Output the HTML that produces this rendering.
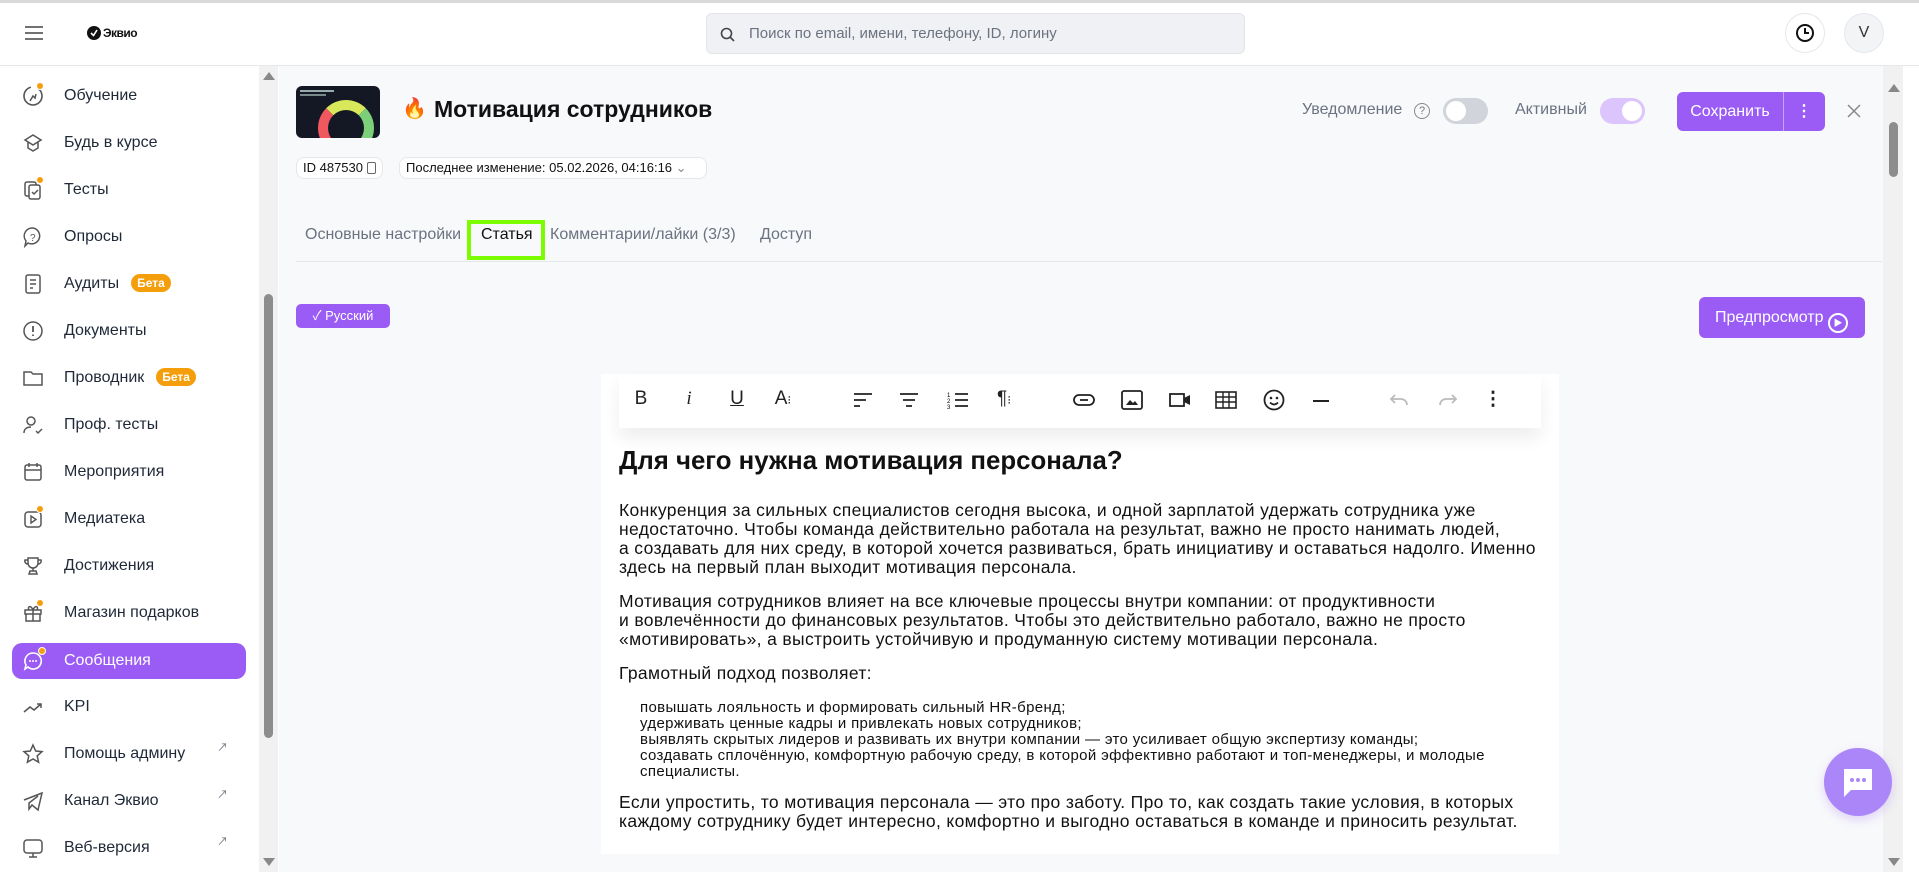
<!DOCTYPE html>
<html><head><meta charset="utf-8"><style>
*{box-sizing:border-box;margin:0;padding:0}
body{width:1919px;height:872px;overflow:hidden;background:#fff;font-family:"Liberation Sans","Noto Sans CJK SC",sans-serif;color:#111;position:relative}
.abs{position:absolute}
.top{left:0;top:0;width:1919px;height:3px;background:#d9d9d9}
.hdr-line{left:0;top:65px;width:1919px;height:1px;background:#e5e7eb}
.search{left:706px;top:13px;width:539px;height:41px;background:#f0f1f4;border:1px solid #e3e5e9;border-radius:6px;color:#6b7280;font-size:15px;line-height:39px;padding-left:42px}
.circ{width:40px;height:40px;border-radius:50%;border:1px solid #e5e7eb;background:#fff;text-align:center;line-height:38px;font-size:16px;color:#333}
.side{left:0;top:66px;width:257px;height:806px;background:#fff}
.item{position:absolute;left:12px;width:234px;height:36px;border-radius:10px;font-size:16px;line-height:36px;padding-left:52px;color:#1f2937}
.item svg{position:absolute;left:10px;top:7px}
.item.act{background:#9a5cf5;color:#fff}
.beta{display:inline-block;background:#f59e0b;color:#fff;font-size:12px;font-weight:bold;line-height:18px;padding:0 6px;border-radius:9px;margin-left:12px;vertical-align:1px}
.ext{position:absolute;right:18px;top:-6px;font-size:11px;color:#6b7280}
.dot{position:absolute;width:8px;height:8px;border-radius:50%;background:#f59e0b;border:1px solid #fff}
.sb1{left:259px;top:66px;width:19px;height:806px;background:#f1f1f1}
.main{left:279px;top:66px;width:1604px;height:806px;background:#f8f9fb}
.sb2{left:1883px;top:66px;width:20px;height:806px;background:#f1f1f1}
.chip{border:1px solid #e5e7eb;background:#fff;border-radius:8px;font-size:13px;line-height:20px;padding:0 6px;color:#111}
.tab{font-size:16px;color:#6b7280;top:226px}
.btn{background:#9a5cf5;color:#fff;border-radius:6px;font-size:16px}
.card{left:601px;top:374px;width:958px;height:480px;background:#fff}
.tb{left:619px;top:374px;width:922px;height:54px;background:#fff;box-shadow:0 10px 18px rgba(0,0,0,.07)}
.ic{position:absolute;top:14px;font-size:19px;color:#222;text-align:center;width:26px;margin-left:-13px}
.txt{left:619px;font-size:17.5px;letter-spacing:.35px;line-height:19px;color:#111;white-space:nowrap}
</style></head><body>
<div class="abs top"></div>
<svg class="abs" style="left:24px;top:25px" width="20" height="16"><path d="M1 2h18M1 8h18M1 14h18" stroke="#444" stroke-width="1.6"/></svg>
<div class="abs" style="left:87px;top:26px;width:14px;height:14px;border-radius:50%;background:#111"></div>
<svg class="abs" style="left:87px;top:26px" width="14" height="14"><path d="M4 7l2.5 2.5L10 4" stroke="#fff" stroke-width="1.6" fill="none"/></svg>
<div class="abs" style="left:103px;top:26px;font-size:12px;font-weight:bold;letter-spacing:-.5px">Эквио</div>
<div class="abs search">Поиск по email, имени, телефону, ID, логину</div>
<svg class="abs" style="left:720px;top:27px" width="15" height="15"><circle cx="6.5" cy="6.5" r="5" stroke="#444" stroke-width="1.6" fill="none"/><path d="M10 10l4 4" stroke="#444" stroke-width="1.6"/></svg>
<div class="abs circ" style="left:1785px;top:13px"><svg width="22" height="22" style="margin-top:8px"><circle cx="11" cy="11" r="8" stroke="#111" stroke-width="2" fill="none"/><path d="M11 6v5h4" stroke="#111" stroke-width="2" fill="none"/></svg></div>
<div class="abs circ" style="left:1844px;top:13px;background:#f3f4f6">V</div>
<div class="abs hdr-line"></div>

<div class="abs side">
 <div class="item" style="top:12px"><svg width="22" height="22"><circle cx="11" cy="11" r="9" stroke="#555" stroke-width="1.6" fill="none" stroke-dasharray="40 8"/><path d="M8 16l3-5 2 2 1-4" stroke="#555" stroke-width="1.5" fill="none"/></svg><span class="dot" style="left:24px;top:4px"></span>Обучение</div>
 <div class="item" style="top:59px"><svg width="22" height="22"><path d="M3 8l8-5 8 5-8 5z M6 10v6l5 3 5-3v-6" stroke="#555" stroke-width="1.5" fill="none"/></svg>Будь в курсе</div>
 <div class="item" style="top:106px"><svg width="22" height="22"><rect x="3" y="3" width="11" height="14" rx="2" stroke="#555" stroke-width="1.5" fill="none"/><rect x="7" y="6" width="11" height="14" rx="2" stroke="#555" stroke-width="1.5" fill="#fff"/><path d="M10 13l2 2 4-4" stroke="#555" stroke-width="1.5" fill="none"/></svg><span class="dot" style="left:24px;top:4px"></span>Тесты</div>
 <div class="item" style="top:153px"><svg width="22" height="22"><path d="M11 2a8 8 0 1 1-5 15l-3 3 1-5A8 8 0 0 1 11 2z" stroke="#555" stroke-width="1.5" fill="none"/><text x="8" y="15" font-size="10" fill="#555">?</text></svg>Опросы</div>
 <div class="item" style="top:200px"><svg width="22" height="22"><rect x="4" y="2" width="14" height="18" rx="2" stroke="#555" stroke-width="1.5" fill="none"/><path d="M8 7h6M8 11h6M8 15h3" stroke="#555" stroke-width="1.5"/></svg>Аудиты<span class="beta">Бета</span></div>
 <div class="item" style="top:247px"><svg width="22" height="22"><circle cx="11" cy="11" r="9" stroke="#555" stroke-width="1.5" fill="none"/><path d="M11 6v6M11 14.5v1.5" stroke="#555" stroke-width="1.8"/></svg>Документы</div>
 <div class="item" style="top:294px"><svg width="22" height="22"><path d="M2 5h7l2 2h9v11H2z" stroke="#555" stroke-width="1.5" fill="none"/></svg>Проводник<span class="beta">Бета</span></div>
 <div class="item" style="top:341px"><svg width="22" height="22"><circle cx="9" cy="7" r="4" stroke="#555" stroke-width="1.5" fill="none"/><path d="M2 19c0-4 3-6 7-6M14 17l2 2 4-4" stroke="#555" stroke-width="1.5" fill="none"/></svg>Проф. тесты</div>
 <div class="item" style="top:388px"><svg width="22" height="22"><rect x="3" y="4" width="16" height="15" rx="2" stroke="#555" stroke-width="1.5" fill="none"/><path d="M3 9h16M7 2v4M15 2v4" stroke="#555" stroke-width="1.5"/></svg>Мероприятия</div>
 <div class="item" style="top:435px"><svg width="22" height="22"><rect x="3" y="4" width="16" height="15" rx="3" stroke="#555" stroke-width="1.5" fill="none"/><path d="M9 8v7l5-3.5z" stroke="#555" stroke-width="1.4" fill="none"/></svg><span class="dot" style="left:24px;top:4px"></span>Медиатека</div>
 <div class="item" style="top:482px"><svg width="22" height="22"><path d="M6 3h10v5a5 5 0 0 1-10 0zM6 5H3a3 3 0 0 0 3 4M16 5h3a3 3 0 0 1-3 4M11 13v3M7 19h8l-1-3H8z" stroke="#555" stroke-width="1.5" fill="none"/></svg>Достижения</div>
 <div class="item" style="top:529px"><svg width="22" height="22"><rect x="3" y="8" width="16" height="4" stroke="#555" stroke-width="1.5" fill="none"/><path d="M4 12v7h14v-7M11 8v11M11 8C9 3 5 4 7 8M11 8c2-5 6-4 4 0" stroke="#555" stroke-width="1.5" fill="none"/></svg><span class="dot" style="left:24px;top:4px"></span>Магазин подарков</div>
 <div class="item act" style="top:577px"><svg width="22" height="22"><path d="M11 3a8 8 0 1 1-5 14l-3 2 1-4A8 8 0 0 1 11 3z" stroke="#fff" stroke-width="1.6" fill="none"/><circle cx="8" cy="11" r="1" fill="#fff"/><circle cx="11" cy="11" r="1" fill="#fff"/><circle cx="14" cy="11" r="1" fill="#fff"/></svg><span class="dot" style="left:26px;top:4px"></span>Сообщения</div>
 <div class="item" style="top:623px"><svg width="22" height="22"><path d="M2 16l6-5 4 3 7-6M15 8h4v4" stroke="#555" stroke-width="1.5" fill="none"/></svg>KPI</div>
 <div class="item" style="top:670px"><svg width="22" height="22"><path d="M11 2l2.7 6 6.3.6-4.8 4.3 1.4 6.3L11 16l-5.6 3.2 1.4-6.3L2 8.6 8.3 8z" stroke="#555" stroke-width="1.5" fill="none"/></svg>Помощь админу<span class="ext">↗</span></div>
 <div class="item" style="top:717px"><svg width="22" height="22"><path d="M2 10l18-7-4 17-6-5-3 4v-6l9-7" stroke="#555" stroke-width="1.5" fill="none"/></svg>Канал Эквио<span class="ext">↗</span></div>
 <div class="item" style="top:764px"><svg width="22" height="22"><rect x="2" y="3" width="18" height="13" rx="3" stroke="#555" stroke-width="1.5" fill="none"/><path d="M11 16v4M7 20h8" stroke="#555" stroke-width="1.5"/></svg>Веб-версия<span class="ext">↗</span></div>
</div>
<div class="abs sb1"></div>
<div class="abs" style="left:263px;top:72px;width:0;height:0;border-left:6px solid transparent;border-right:6px solid transparent;border-bottom:8px solid #888"></div>
<div class="abs" style="left:264px;top:294px;width:9px;height:444px;background:#8d8d8d;border-radius:5px"></div>
<div class="abs" style="left:263px;top:858px;width:0;height:0;border-left:6px solid transparent;border-right:6px solid transparent;border-top:8px solid #888"></div>

<div class="abs main"></div>
<div class="abs" style="left:296px;top:86px;width:84px;height:52px;border-radius:6px;background:#141824;overflow:hidden">
 <div style="position:absolute;left:22px;top:14px;width:56px;height:56px;border-radius:50%;border:10px solid transparent;border-top-color:#d9e85a;border-right-color:#7cd07a;border-left-color:#f0585f"></div>
 <div style="position:absolute;left:4px;top:4px;width:34px;height:2px;background:#9aa"></div>
 <div style="position:absolute;left:4px;top:8px;width:26px;height:2px;background:#788"></div>
</div>
<div class="abs" style="left:402px;top:96px;font-size:20px">🔥</div>
<div class="abs" style="left:434px;top:96px;font-size:23px;font-weight:bold">Мотивация сотрудников</div>
<div class="abs chip" style="left:296px;top:157px">ID 487530 <span style="display:inline-block;width:9px;height:12px;border:1.3px solid #666;border-radius:2px;vertical-align:-2px"></span></div>
<div class="abs chip" style="left:399px;top:157px;width:308px">Последнее изменение: 05.02.2026, 04:16:16 <span style="color:#888">⌄</span></div>

<div class="abs" style="left:1302px;top:101px;font-size:16px;color:#6b7280">Уведомление</div>
<div class="abs" style="left:1414px;top:103px;width:16px;height:16px;border:1.3px solid #888;border-radius:50%;font-size:11px;text-align:center;line-height:14px;color:#777">?</div>
<div class="abs" style="left:1443px;top:98px;width:45px;height:26px;border-radius:13px;background:#d1d5db"><div style="position:absolute;left:3px;top:3px;width:20px;height:20px;border-radius:50%;background:#fff"></div></div>
<div class="abs" style="left:1515px;top:101px;font-size:16px;color:#6b7280">Активный</div>
<div class="abs" style="left:1600px;top:98px;width:45px;height:26px;border-radius:13px;background:#dcc4fd"><div style="position:absolute;right:3px;top:3px;width:20px;height:20px;border-radius:50%;background:#fff"></div></div>
<div class="abs btn" style="left:1677px;top:92px;width:148px;height:39px"><div style="position:absolute;left:0;width:106px;text-align:center;line-height:39px">Сохранить</div><div style="position:absolute;left:106px;top:0;width:1px;height:39px;background:#c4a4fb"></div><div style="position:absolute;left:106px;width:42px;text-align:center;line-height:39px;font-weight:bold">⋮</div></div>
<svg class="abs" style="left:1847px;top:104px" width="14" height="14"><path d="M1 1l12 12M13 1L1 13" stroke="#888" stroke-width="1.5"/></svg>
<div class="abs sb2"></div>
<div class="abs" style="left:1888px;top:84px;width:0;height:0;border-left:6px solid transparent;border-right:6px solid transparent;border-bottom:8px solid #888"></div>
<div class="abs" style="left:1889px;top:122px;width:9px;height:55px;background:#8d8d8d;border-radius:5px"></div>
<div class="abs" style="left:1888px;top:858px;width:0;height:0;border-left:6px solid transparent;border-right:6px solid transparent;border-top:8px solid #888"></div>

<div class="abs tab" style="left:305px">Основные настройки</div>
<div class="abs" style="left:467px;top:220px;width:78px;height:40px;border:4px solid #7cfc00"></div>
<div class="abs tab" style="left:481px;color:#111">Статья</div>
<div class="abs tab" style="left:550px">Комментарии/лайки (3/3)</div>
<div class="abs tab" style="left:760px">Доступ</div>
<div class="abs" style="left:296px;top:261px;width:1586px;height:1px;background:#e5e7eb"></div>

<div class="abs btn" style="left:296px;top:304px;width:94px;height:24px;font-size:13px;line-height:24px;border-radius:5px;text-align:center">✓ Русский</div>
<div class="abs btn" style="left:1699px;top:297px;width:166px;height:41px;line-height:41px;padding-left:16px">Предпросмотр <span style="display:inline-block;width:20px;height:20px;border:2px solid #fff;border-radius:50%;vertical-align:-4px;font-size:9px;line-height:16px;text-align:center">▶</span></div>

<div class="abs card"></div>
<div class="abs tb">
 <div class="ic" style="left:22px;">B</div>
 <div class="ic" style="left:70px;font-style:italic;font-family:'Liberation Serif'">i</div>
 <div class="ic" style="left:118px;text-decoration:underline">U</div>
 <div class="ic" style="left:164px">A<span style="font-size:12px">⁝</span></div>
 <svg class="abs" style="left:234px;top:18px" width="20" height="16"><path d="M1 2h18M1 8h12M1 14h6" stroke="#222" stroke-width="1.8"/></svg>
 <svg class="abs" style="left:280px;top:18px" width="20" height="16"><path d="M1 2h18M4 8h12M7 14h6" stroke="#222" stroke-width="1.8"/></svg>
 <svg class="abs" style="left:328px;top:17px" width="22" height="18"><path d="M8 3h13M8 9h13M8 15h13" stroke="#222" stroke-width="1.8"/><text x="0" y="6" font-size="6">1</text><text x="0" y="12" font-size="6">2</text><text x="0" y="18" font-size="6">3</text></svg>
 <div class="ic" style="left:385px">¶<span style="font-size:12px">⁝</span></div>
 <svg class="abs" style="left:454px;top:19px" width="22" height="14"><rect x="1" y="2" width="20" height="10" rx="5" stroke="#222" stroke-width="1.8" fill="none"/><path d="M7 7h8" stroke="#222" stroke-width="1.8"/></svg>
 <svg class="abs" style="left:502px;top:16px" width="22" height="20"><rect x="1" y="1" width="20" height="18" rx="2" stroke="#222" stroke-width="1.8" fill="none"/><path d="M5 15l4-5 3 3 2-2 3 4z" fill="#222"/></svg>
 <svg class="abs" style="left:550px;top:18px" width="22" height="16"><rect x="1" y="2" width="14" height="12" stroke="#222" stroke-width="1.8" fill="none"/><path d="M15 6l6-3v10l-6-3z" fill="#222"/></svg>
 <svg class="abs" style="left:596px;top:17px" width="22" height="18"><rect x="1" y="1" width="20" height="16" stroke="#222" stroke-width="1.6" fill="none"/><path d="M1 6h20M1 11h20M8 1v16M14 1v16" stroke="#222" stroke-width="1.4"/></svg>
 <svg class="abs" style="left:644px;top:15px" width="22" height="22"><circle cx="11" cy="11" r="9.5" stroke="#222" stroke-width="1.8" fill="none"/><circle cx="8" cy="9" r="1.3" fill="#222"/><circle cx="14" cy="9" r="1.3" fill="#222"/><path d="M7 13.5q4 4 8 0" stroke="#222" stroke-width="1.6" fill="none"/></svg>
 <div class="abs" style="left:694px;top:26px;width:16px;height:2px;background:#222"></div>
 <svg class="abs" style="left:770px;top:19px" width="20" height="14"><path d="M6 2L2 6l4 4M2 6h10a6 6 0 0 1 6 6" stroke="#bbb" stroke-width="1.8" fill="none"/></svg>
 <svg class="abs" style="left:819px;top:19px" width="20" height="14"><path d="M14 2l4 4-4 4M18 6H8a6 6 0 0 0-6 6" stroke="#bbb" stroke-width="1.8" fill="none"/></svg>
 <div class="ic" style="left:874px;font-weight:bold">⋮</div>
</div>
<div class="abs" style="left:619px;top:447px;font-size:25.8px;font-weight:bold">Для чего нужна мотивация персонала?</div>
<div class="abs txt" style="top:501px">Конкуренция за сильных специалистов сегодня высока, и одной зарплатой удержать сотрудника уже<br>недостаточно. Чтобы команда действительно работала на результат, важно не просто нанимать людей,<br>а создавать для них среду, в которой хочется развиваться, брать инициативу и оставаться надолго. Именно<br>здесь на первый план выходит мотивация персонала.</div>
<div class="abs txt" style="top:592px">Мотивация сотрудников влияет на все ключевые процессы внутри компании: от продуктивности<br>и вовлечённости до финансовых результатов. Чтобы это действительно работало, важно не просто<br>«мотивировать», а выстроить устойчивую и продуманную систему мотивации персонала.</div>
<div class="abs txt" style="top:664px">Грамотный подход позволяет:</div>
<div class="abs txt" style="top:700px;left:640px;font-size:15px;letter-spacing:.35px;line-height:16px">повышать лояльность и формировать сильный HR-бренд;<br>удерживать ценные кадры и привлекать новых сотрудников;<br>выявлять скрытых лидеров и развивать их внутри компании — это усиливает общую экспертизу команды;<br>создавать сплочённую, комфортную рабочую среду, в которой эффективно работают и топ-менеджеры, и молодые<br>специалисты.</div>
<div class="abs txt" style="top:793px">Если упростить, то мотивация персонала — это про заботу. Про то, как создать такие условия, в которых<br>каждому сотруднику будет интересно, комфортно и выгодно оставаться в команде и приносить результат.</div>

<div class="abs" style="left:1824px;top:748px;width:68px;height:68px;border-radius:50%;background:#ab86f8;box-shadow:0 4px 10px rgba(150,100,240,.25)"></div>
<svg class="abs" style="left:1841px;top:767px" width="34" height="32"><path d="M3 2h28v21H10l-7 7z" fill="#fff"/><circle cx="11" cy="13" r="2" fill="#ab86f8"/><circle cx="17" cy="13" r="2" fill="#ab86f8"/><circle cx="23" cy="13" r="2" fill="#ab86f8"/></svg>
</body></html>
